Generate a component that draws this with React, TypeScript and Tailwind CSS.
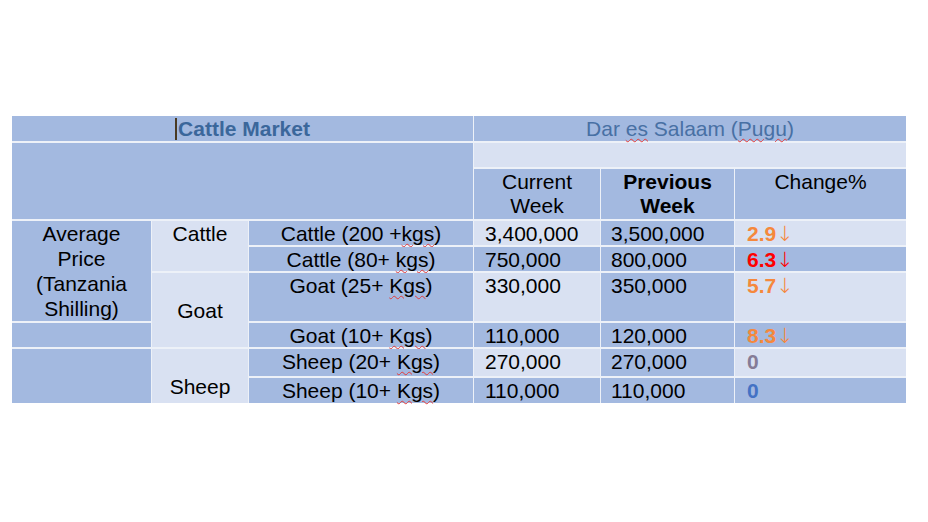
const dark = "bg-[#a3b9e0]";
const light = "bg-[#d9e1f2]";

type Row = {
  label: string;
  current: string;
  previous: string;
  change: string;
  arrow: boolean;
  changeColor: string;
  band: boolean;
};

const rows: Row[] = [
  { label: "Cattle (200 +", current: "3,400,000", previous: "3,500,000", change: "2.9", arrow: true, changeColor: "text-[#f5883c]", band: false },
  { label: "Cattle (80+ ", current: "750,000", previous: "800,000", change: "6.3", arrow: true, changeColor: "text-[#ff0000]", band: true },
  { label: "Goat (25+ ", current: "330,000", previous: "350,000", change: "5.7", arrow: true, changeColor: "text-[#f5883c]", band: false },
  { label: "Goat (10+ ", current: "110,000", previous: "120,000", change: "8.3", arrow: true, changeColor: "text-[#f5883c]", band: true },
  { label: "Sheep (20+ ", current: "270,000", previous: "270,000", change: "0", arrow: false, changeColor: "text-[#857c96]", band: false },
  { label: "Sheep (10+ ", current: "110,000", previous: "110,000", change: "0", arrow: false, changeColor: "text-[#4472c4]", band: true },
];

const rowStarts = ["row-start-4", "row-start-5", "row-start-6", "row-start-7", "row-start-8", "row-start-9"];

const Squiggle = ({ children }: { children: React.ReactNode }) => (
  <span className="underline decoration-wavy decoration-[#e23b3b] decoration-1 underline-offset-[2px]">{children}</span>
);

export default function App() {
  return (
    <div className="min-h-[522px] w-[928px] bg-white pl-[12px] pt-[116px] font-['Liberation_Sans',Arial,sans-serif] text-[21px] leading-[25px] text-black">
      <div className="grid w-[894px] grid-cols-[139px_96px_224px_126px_133px_171px] grid-rows-[25px_24px_50px_24px_24px_48px_24px_27px_25px] gap-x-px gap-y-[2px] bg-[#edf1f8]">
        {/* title row */}
        <div className={`${dark} col-span-3 col-start-1 row-start-1 flex items-center justify-center font-bold text-[#3b679b]`}>
          <span className="mr-px inline-block h-[22px] w-[2px] bg-[#4a3a22]" />
          Cattle Market
        </div>
        <div className={`${dark} col-span-3 col-start-4 row-start-1 flex items-center justify-center text-[#4870a4]`}>
          <span>
            Dar <Squiggle>es</Squiggle> Salaam (<Squiggle>Pugu</Squiggle>)
          </span>
        </div>

        {/* header block */}
        <div className={`${dark} col-span-3 col-start-1 row-span-2 row-start-2`} />
        <div className={`${light} col-span-3 col-start-4 row-start-2`} />
        <div className={`${dark} col-start-4 row-start-3 pt-px text-center leading-[24px]`}>
          Current
          <br />
          Week
        </div>
        <div className={`${dark} col-start-5 row-start-3 pt-px text-center font-bold leading-[24px]`}>
          Previous
          <br />
          Week
        </div>
        <div className={`${dark} col-start-6 row-start-3 pt-px text-center leading-[24px]`}>Change%</div>

        {/* first column */}
        <div className={`${dark} col-start-1 row-span-3 row-start-4 text-center`}>
          Average
          <br />
          Price
          <br />
          (Tanzania
          <br />
          Shilling)
        </div>
        <div className={`${dark} col-start-1 row-start-7`} />
        <div className={`${dark} col-start-1 row-span-2 row-start-8`} />

        {/* animal column */}
        <div className={`${light} col-start-2 row-span-2 row-start-4 text-center`}>Cattle</div>
        <div className={`${light} col-start-2 row-span-2 row-start-6 flex items-center justify-center`}>Goat</div>
        <div className={`${light} col-start-2 row-span-2 row-start-8 flex items-end justify-center pb-[4px]`}>Sheep</div>

        {rows.map((r, i) => (
          <div key={r.label + r.current + i} className="contents">
            <div className={`${dark} col-start-3 ${rowStarts[i]} text-center`}>
              {r.label}
              <Squiggle>{i === 0 || i === 1 ? "kgs" : "Kgs"}</Squiggle>)
            </div>
            <div className={`${r.band ? dark : light} col-start-4 ${rowStarts[i]} pl-[11px]`}>{r.current}</div>
            <div className={`${dark} col-start-5 ${rowStarts[i]} pl-[10px]`}>{r.previous}</div>
            <div className={`${r.band ? dark : light} col-start-6 ${rowStarts[i]} pl-[12px] ${r.changeColor}`}>
              <span className="font-bold">{r.change}</span>
              {r.arrow && <span className="font-['DejaVu_Sans',sans-serif] font-light">↓</span>}
            </div>
          </div>
        ))}
      </div>
    </div>
  );
}
